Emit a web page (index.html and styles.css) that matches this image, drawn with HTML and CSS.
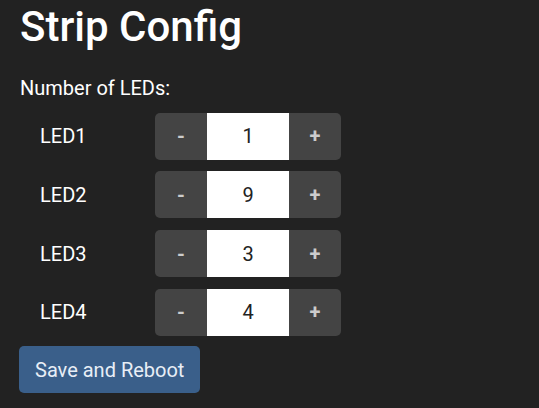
FILE: index.html
```html
<!DOCTYPE html>
<html>
<head>
<meta charset="utf-8">
<link rel="stylesheet" href="styles.css">
</head>
<body>
<h1 class="title">Strip Config</h1>
<p class="subtitle">Number of LEDs:</p>
<div class="rows">
  <div class="row">
    <span class="label">LED1</span>
    <div class="stepper">
      <button class="step minus">-</button>
      <input class="value" type="text" value="1">
      <button class="step plus">+</button>
    </div>
  </div>
  <div class="row">
    <span class="label">LED2</span>
    <div class="stepper">
      <button class="step minus">-</button>
      <input class="value" type="text" value="9">
      <button class="step plus">+</button>
    </div>
  </div>
  <div class="row">
    <span class="label">LED3</span>
    <div class="stepper">
      <button class="step minus">-</button>
      <input class="value" type="text" value="3">
      <button class="step plus">+</button>
    </div>
  </div>
  <div class="row">
    <span class="label">LED4</span>
    <div class="stepper">
      <button class="step minus">-</button>
      <input class="value" type="text" value="4">
      <button class="step plus">+</button>
    </div>
  </div>
</div>
<button class="save">Save and Reboot</button>
</body>
</html>
```
FILE: styles.css
```css
html, body {
  margin: 0;
  background: #222222;
}
body {
  padding: 2px 20px;
  color: #ffffff;
  font-family: Roboto, "Noto Sans", sans-serif;
}
.title {
  margin: 0;
  font-size: 42px;
  line-height: 49px;
  font-weight: 500;
}
.subtitle {
  margin: 25.7px 0 0;
  font-size: 20px;
  line-height: 23px;
}
.rows {
  margin-top: 13px;
  display: flex;
  flex-direction: column;
  gap: 11.7px;
}
.row {
  display: flex;
  align-items: center;
  padding-left: 20px;
}
.label {
  width: 115px;
  font-size: 20px;
}
.stepper {
  display: flex;
  height: 47px;
}
.step {
  width: 52px;
  height: 47px;
  border: none;
  background: #444444;
  color: #cccccc;
  font-family: Roboto, sans-serif;
  font-size: 20px;
  font-weight: 700;
  padding: 0;
}
.minus {
  border-radius: 5px 0 0 5px;
}
.plus {
  border-radius: 0 5px 5px 0;
}
.value {
  width: 82px;
  height: 47px;
  box-sizing: border-box;
  border: none;
  padding: 0;
  margin: 0;
  background: #ffffff;
  color: #222222;
  text-align: center;
  font-family: Roboto, sans-serif;
  font-size: 20px;
}
.save {
  margin-top: 10.7px;
  margin-left: -1px;
  height: 47px;
  padding: 0 16px;
  border: none;
  border-radius: 5px;
  background: #3a5f8a;
  color: #e8eef6;
  font-family: Roboto, sans-serif;
  font-size: 20px;
}
```
